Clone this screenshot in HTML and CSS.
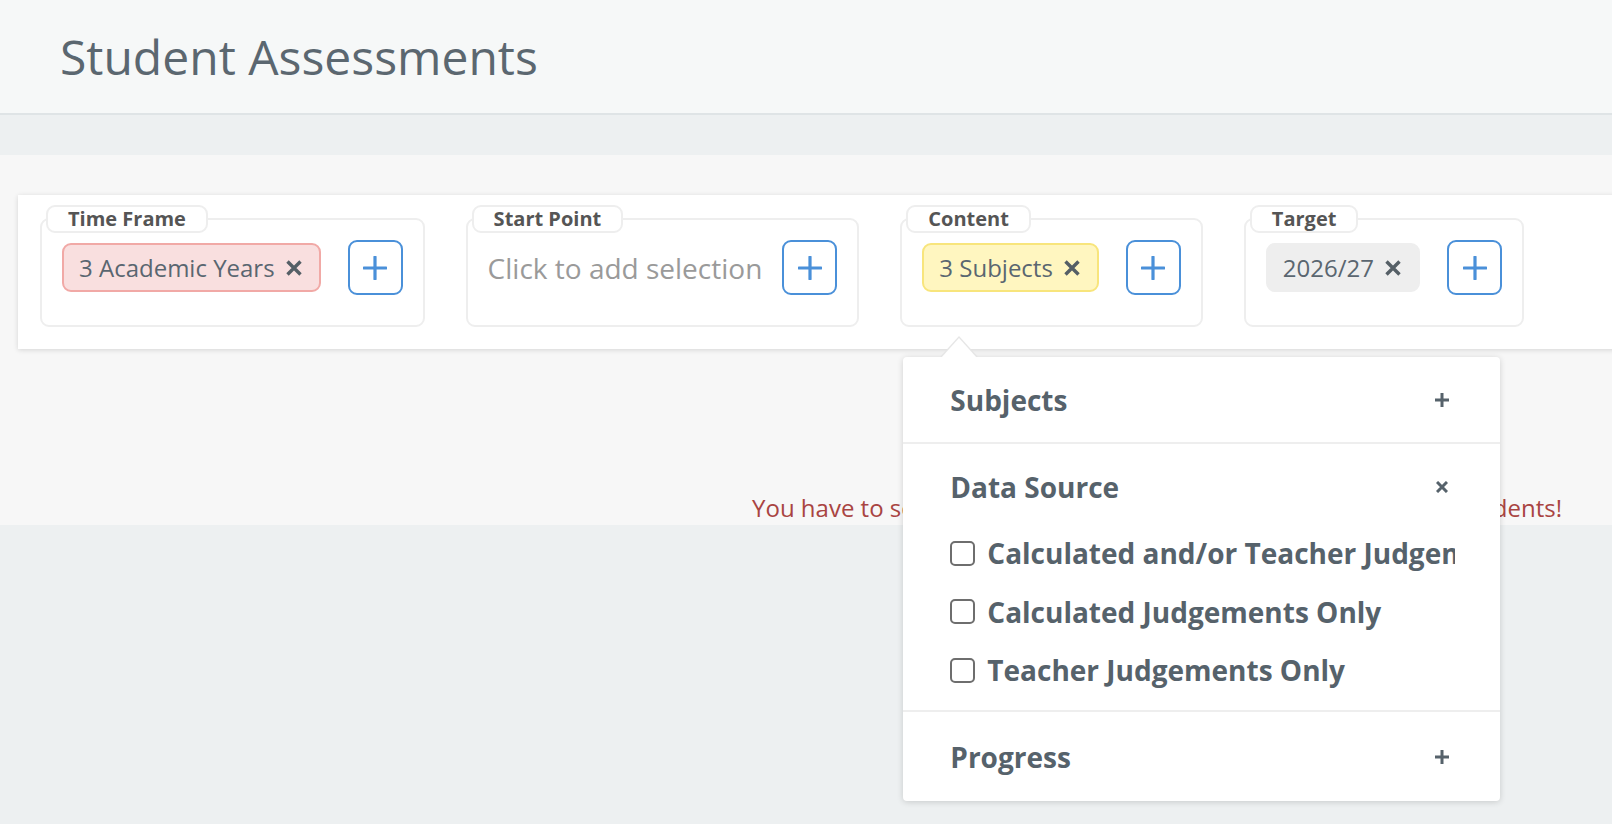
FILE: index.html
```html
<!DOCTYPE html>
<html lang="en">
<head>
    <meta charset="UTF-8">
    <meta name="viewport" content="width=device-width, initial-scale=1.0">
    <title>Student Assessments</title>
    <link rel="stylesheet" href="styles.css">
</head>
<body>

    <header class="page-header">
        <h1>Student Assessments</h1>
    </header>

    <div class="toolbar-band"></div>

    <main class="filters-panel">
        <div class="filter-card">

            <div class="filter">
                <span class="filter-label">Time Frame</span>
                <span class="chip chip-red">3 Academic Years
                    <svg class="chip-remove" viewBox="0 0 16 16"><path d="M1.5 1.5 14.5 14.5M14.5 1.5 1.5 14.5"/></svg>
                </span>
                <button class="add-btn" type="button">
                    <svg viewBox="0 0 24 24"><path d="M12 1v22M1 12h22"/></svg>
                </button>
            </div>

            <div class="filter">
                <span class="filter-label">Start Point</span>
                <span class="placeholder">Click to add selection</span>
                <button class="add-btn" type="button">
                    <svg viewBox="0 0 24 24"><path d="M12 1v22M1 12h22"/></svg>
                </button>
            </div>

            <div class="filter">
                <span class="filter-label">Content</span>
                <span class="chip chip-yellow">3 Subjects
                    <svg class="chip-remove" viewBox="0 0 16 16"><path d="M1.5 1.5 14.5 14.5M14.5 1.5 1.5 14.5"/></svg>
                </span>
                <button class="add-btn" type="button">
                    <svg viewBox="0 0 24 24"><path d="M12 1v22M1 12h22"/></svg>
                </button>

                <!-- content picker, opened -->
                <div class="dropdown">
                    <div class="dropdown-section">
                        <div class="section-head">
                            <span>Subjects</span>
                            <svg class="section-toggle" viewBox="0 0 14 14"><path d="M7 0v14M0 7h14"/></svg>
                        </div>
                    </div>
                    <div class="dropdown-section">
                        <div class="section-head">
                            <span>Data Source</span>
                            <svg class="section-toggle close" viewBox="0 0 12 12"><path d="M1 1 11 11M11 1 1 11"/></svg>
                        </div>
                        <ul class="option-list">
                            <li><label><input type="checkbox"> Calculated and/or Teacher Judgements</label></li>
                            <li><label><input type="checkbox"> Calculated Judgements Only</label></li>
                            <li><label><input type="checkbox"> Teacher Judgements Only</label></li>
                        </ul>
                    </div>
                    <div class="dropdown-section">
                        <div class="section-head">
                            <span>Progress</span>
                            <svg class="section-toggle" viewBox="0 0 14 14"><path d="M7 0v14M0 7h14"/></svg>
                        </div>
                    </div>
                </div>
            </div>

            <div class="filter">
                <span class="filter-label">Target</span>
                <span class="chip chip-grey">2026/27
                    <svg class="chip-remove" viewBox="0 0 16 16"><path d="M1.5 1.5 14.5 14.5M14.5 1.5 1.5 14.5"/></svg>
                </span>
                <button class="add-btn" type="button">
                    <svg viewBox="0 0 24 24"><path d="M12 1v22M1 12h22"/></svg>
                </button>
            </div>

        </div>

        <p class="filters-error">You have to select a Start Point to be able to see data for these students!</p>
    </main>

</body>
</html>
```

FILE: styles.css
```css
html, body {
    margin: 0;
    padding: 0;
}
body {
    font-family: "Open Sans", "Liberation Sans", sans-serif;
    background-color: #edf0f1;
    color: #56626b;
    overflow: hidden;
    min-height: 824px;
}

.page-header {
    background-color: #f6f8f8;
    border-bottom: 2px solid #dfe4e6;
    height: 113px;
    display: flex;
    align-items: center;
    padding-left: 60px;
}
.page-header h1 {
    margin: 0;
    font-size: 48px;
    font-weight: 400;
    color: #5b6770;
}

.toolbar-band {
    height: 40px;
}

.filters-panel {
    background-color: #f7f7f7;
    padding: 40px 0 2px 0;
}

.filter-card {
    background: #fff;
    margin: 0 -40px 0 18px;
    padding: 23px 22px 22px 22px;
    display: flex;
    gap: 41px;
    box-shadow: 0 1px 5px rgba(0, 0, 0, 0.14);
}

/* one filter box with its tab on the top border */
.filter {
    position: relative;
    display: flex;
    align-items: center;
    border: 2px solid #eeeeee;
    border-radius: 9px;
    padding: 20px 20px 30px 20px;
    gap: 20px;
}
.filter-label {
    position: absolute;
    top: -15px;
    left: 4px;
    background: #fff;
    border: 2px solid #eeeeee;
    border-radius: 9px;
    padding: 0 20px;
    font-size: 20px;
    font-weight: 700;
    line-height: 24px;
    color: #555;
}

.chip {
    display: flex;
    align-items: center;
    gap: 11px;
    height: 45px;
    padding: 0 17px 0 15px;
    margin-right: 7px;
    border: 2px solid transparent;
    border-radius: 9px;
    font-size: 24px;
    color: #5a6670;
}
.chip-red {
    background-color: #f9dfdf;
    border-color: #f1a9a6;
}
.chip-yellow {
    background-color: #fff6c0;
    border-color: #f8e57c;
}
.chip-grey {
    background-color: #eeeeee;
    border-color: #eeeeee;
}
.chip-remove {
    width: 16px;
    height: 16px;
    fill: none;
    stroke: #555f66;
    stroke-width: 3.4;
}

.placeholder {
    font-size: 28px;
    color: #9a9a9a;
    white-space: nowrap;
}

.add-btn {
    width: 55px;
    height: 55px;
    padding: 0;
    display: flex;
    align-items: center;
    justify-content: center;
    background: #fff;
    border: 2px solid #4a90d9;
    border-radius: 9px;
    cursor: pointer;
}
.add-btn svg {
    width: 24px;
    height: 24px;
    fill: none;
    stroke: #4a90d9;
    stroke-width: 3.2;
    stroke-linecap: round;
}

.dropdown {
    position: absolute;
    top: 137px;
    left: 1px;
    width: 597px;
    background: #fff;
    border-radius: 4px;
    box-shadow: 0 1px 6px rgba(0, 0, 0, 0.16);
    z-index: 5;
}
.dropdown::before {
    content: "";
    position: absolute;
    top: -21px;
    left: 37px;
    border: 19px solid transparent;
    border-top: 0;
    border-bottom: 21px solid #e6e6e6;
}
.dropdown::after {
    content: "";
    position: absolute;
    top: -19px;
    left: 38px;
    border: 18px solid transparent;
    border-top: 0;
    border-bottom: 20px solid #fff;
}
.dropdown-section {
    border-top: 2px solid #eeeeee;
}
.dropdown-section:first-child {
    border-top: none;
}
.dropdown-section:last-child {
    padding: 2px 0 2px 0;
}
.section-head {
    display: flex;
    justify-content: space-between;
    align-items: center;
    padding: 25px 51px 24px 47px;
    font-size: 28px;
    font-weight: 700;
    line-height: 36px;
}
.section-toggle {
    width: 14px;
    height: 14px;
    fill: none;
    stroke: #56626b;
    stroke-width: 3;
}
.section-toggle.close {
    width: 12px;
    height: 12px;
    margin-right: 1px;
}

.option-list {
    list-style: none;
    margin: -5px 0 0 0;
    padding: 0 45px 10px 47px;
}
.option-list li {
    height: 58.5px;
    display: flex;
    align-items: center;
    white-space: nowrap;
    overflow: hidden;
}
.option-list label {
    display: flex;
    align-items: center;
    gap: 12px;
    font-size: 28px;
    font-weight: 700;
}
.option-list input {
    appearance: none;
    margin: 0;
    width: 25px;
    height: 25px;
    border: 2px solid #6e6e6e;
    border-radius: 5px;
    background: #fff;
    flex-shrink: 0;
}

.filters-error {
    margin: 144px 0 0 0;
    padding-right: 50px;
    text-align: right;
    font-size: 24px;
    line-height: 30px;
    color: #a94442;
}
```
